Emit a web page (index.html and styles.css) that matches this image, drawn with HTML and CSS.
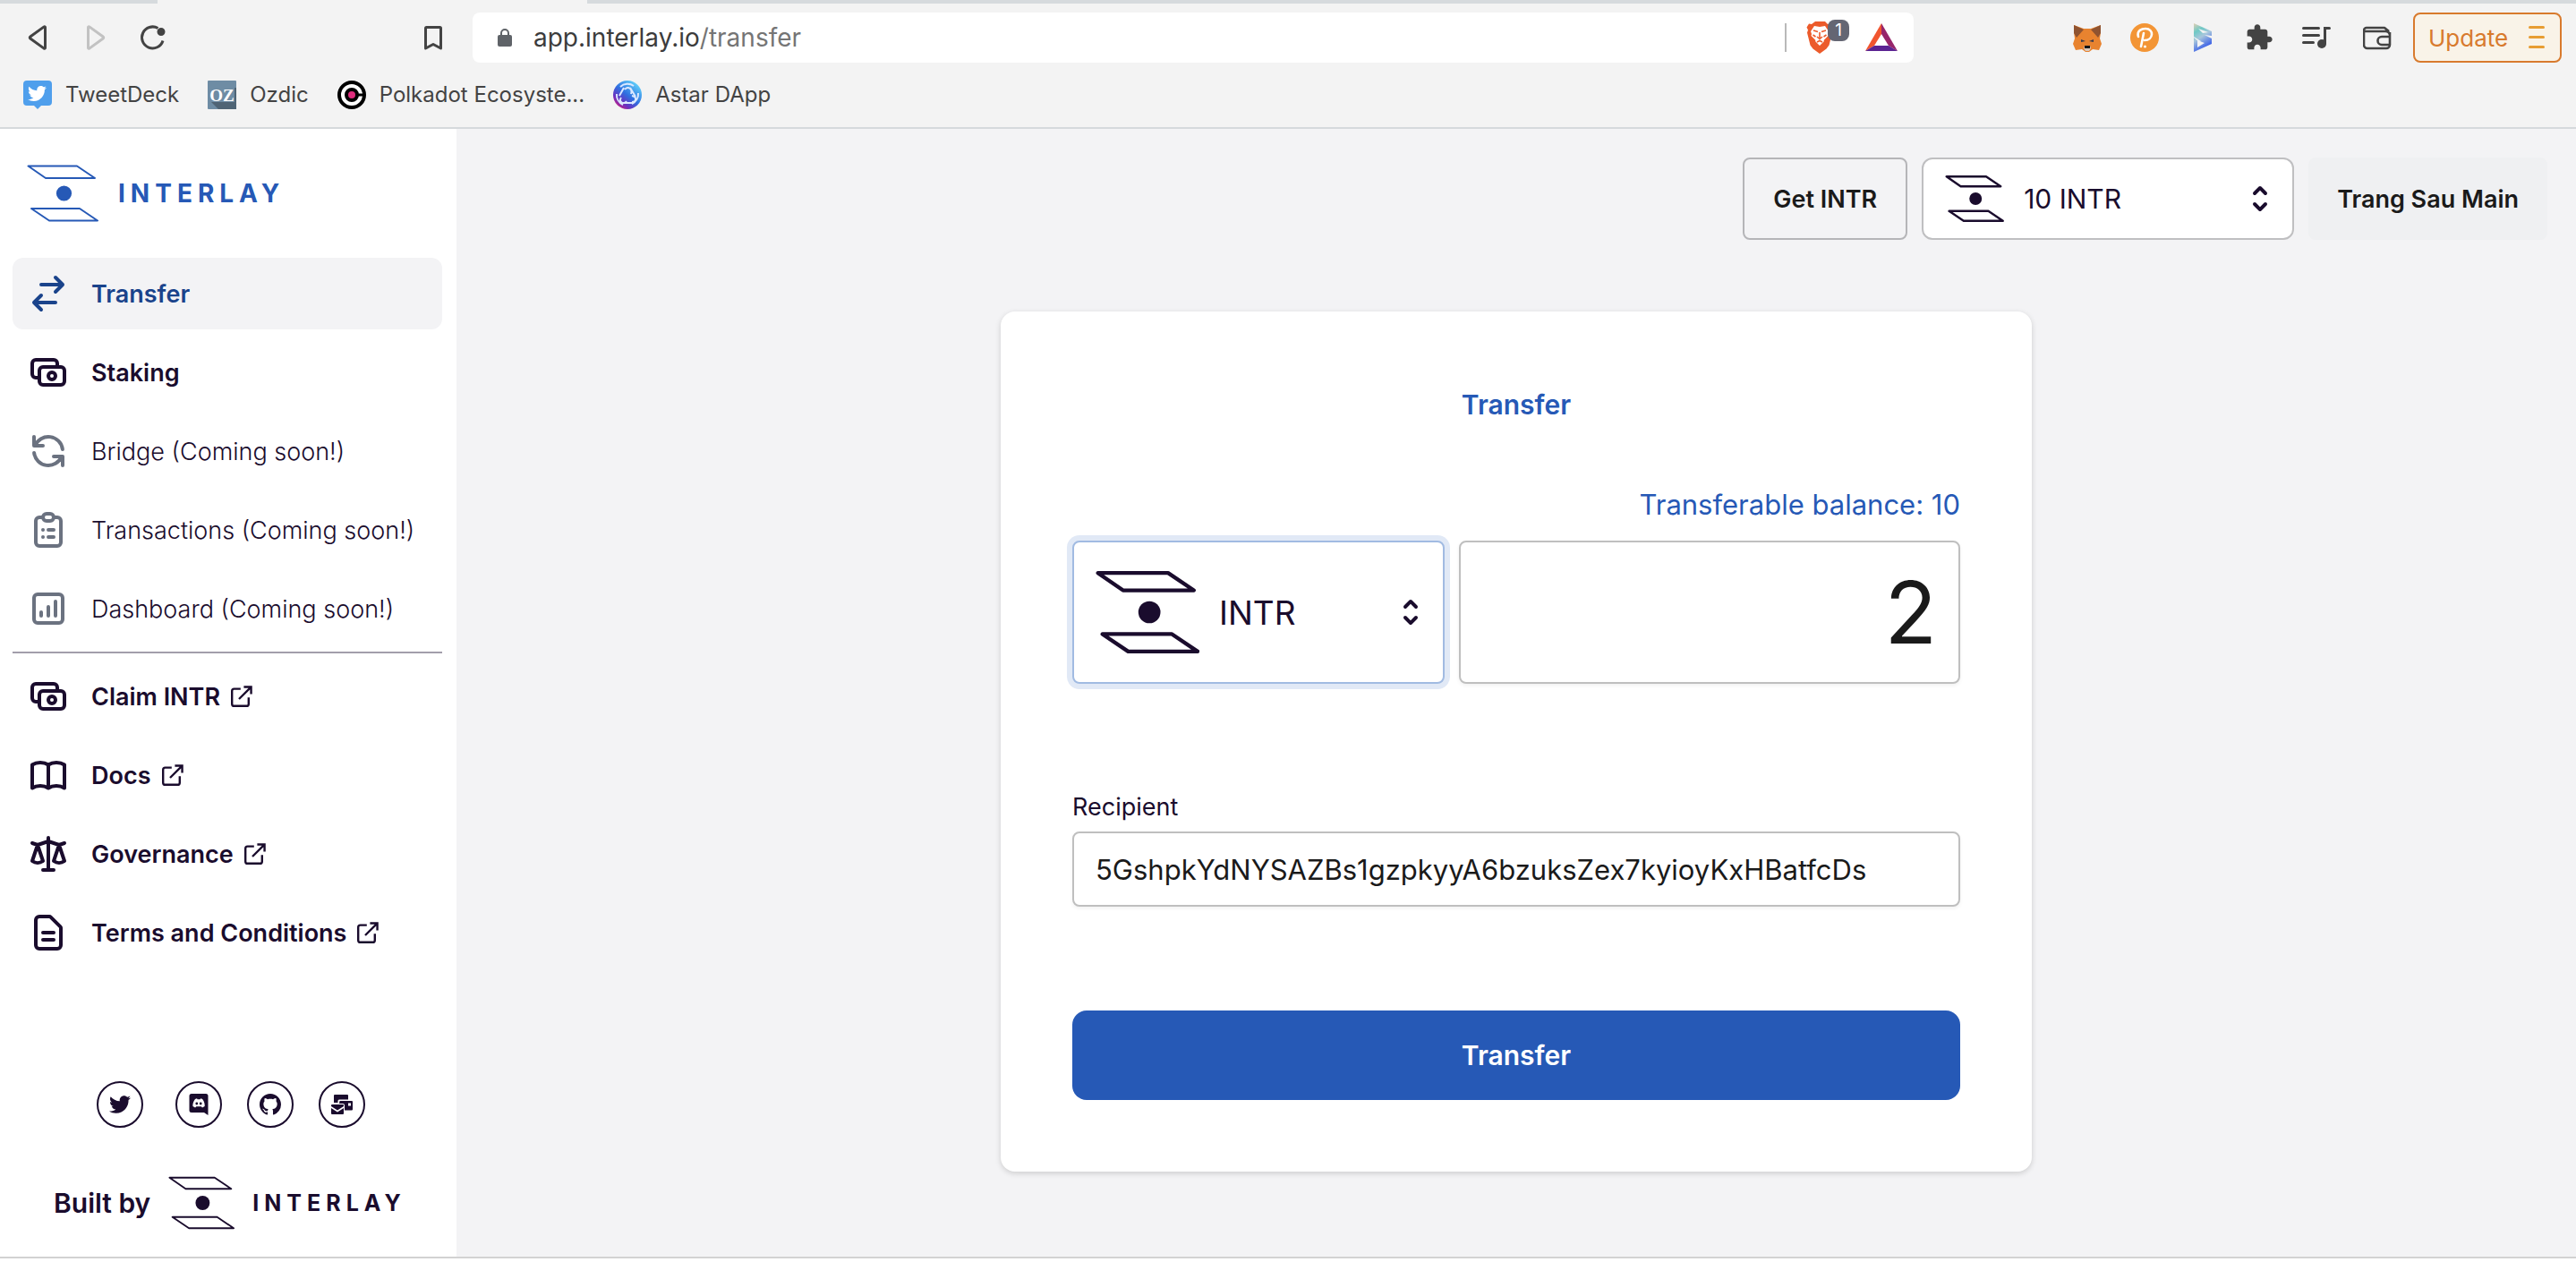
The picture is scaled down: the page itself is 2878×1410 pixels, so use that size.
FILE: index.html
```html
<!DOCTYPE html>
<html lang="en">
<head>
<meta charset="utf-8">
<title>Interlay - Transfer</title>
<link rel="stylesheet" href="styles.css">
</head>
<body>
<svg class="defs" aria-hidden="true">
  <symbol id="mark" viewBox="0 0 80 64">
    <path d="M1.500 1.500H56L76 15H21ZM5 49H59L79 62.500H25Z" fill="none" stroke="currentColor" stroke-linejoin="round"/>
    <circle cx="41.500" cy="32" r="8.600" fill="currentColor" stroke="none"/>
  </symbol>
  <symbol id="switch" viewBox="0 0 24 24"><path d="M8 7h12m0 0l-4-4m4 4l-4 4m0 6H4m0 0l4 4m-4-4l4-4"/></symbol>
  <symbol id="cash" viewBox="0 0 24 24"><path d="M17 9V7a2 2 0 00-2-2H5a2 2 0 00-2 2v6a2 2 0 002 2h2m2 4h10a2 2 0 002-2v-6a2 2 0 00-2-2H9a2 2 0 00-2 2v6a2 2 0 002 2zm7-5a2 2 0 11-4 0 2 2 0 014 0z"/></symbol>
  <symbol id="refresh" viewBox="0 0 24 24"><path d="M4 4v5h.582m15.356 2A8.001 8.001 0 004.582 9m0 0H9m11 11v-5h-.581m0 0a8.003 8.003 0 01-15.357-2m15.357 2H15"/></symbol>
  <symbol id="clipboard" viewBox="0 0 24 24"><path d="M9 5H7a2 2 0 00-2 2v12a2 2 0 002 2h10a2 2 0 002-2V7a2 2 0 00-2-2h-2M9 5a2 2 0 002 2h2a2 2 0 002-2M9 5a2 2 0 012-2h2a2 2 0 012 2m-3 7h3m-3 4h3m-6-4h.01M9 16h.01"/></symbol>
  <symbol id="chart" viewBox="0 0 24 24"><path d="M16 8v8m-4-5v5m-4-2v2m-2 4h12a2 2 0 002-2V6a2 2 0 00-2-2H6a2 2 0 00-2 2v12a2 2 0 002 2z"/></symbol>
  <symbol id="book" viewBox="0 0 24 24"><path d="M12 6.253v13m0-13C10.832 5.477 9.246 5 7.500 5S4.168 5.477 3 6.253v13C4.168 18.477 5.754 18 7.500 18s3.332.477 4.500 1.253m0-13C13.168 5.477 14.754 5 16.500 5c1.747 0 3.332.477 4.500 1.253v13C19.832 18.477 18.247 18 16.500 18c-1.746 0-3.332.477-4.500 1.253"/></symbol>
  <symbol id="scale" viewBox="0 0 24 24"><path d="M3 6l3 1m0 0l-3 9a5.002 5.002 0 006.001 0M6 7l3 9M6 7l6-2m6 2l3-1m-3 1l-3 9a5.002 5.002 0 006.001 0M18 7l3 9m-3-9l-6-2m0-2v2m0 16V5m0 16H9m3 0h3"/></symbol>
  <symbol id="document" viewBox="0 0 24 24"><path d="M9 12h6m-6 4h6m2 5H7a2 2 0 01-2-2V5a2 2 0 012-2h5.586a1 1 0 01.707.293l5.414 5.414a1 1 0 01.293.707V19a2 2 0 01-2 2z"/></symbol>
  <symbol id="external" viewBox="2 2 20 20"><path d="M18.500 13v6a2 2 0 01-2 2H5a2 2 0 01-2-2V7a2 2 0 012-2h6" stroke-linecap="butt"/><path d="M14 3.200h6.800V10M20.500 3.500L9.500 14.500" stroke-linecap="butt" stroke-linejoin="miter"/></symbol>
  <symbol id="selector" viewBox="0 0 20 20"><path fill-rule="evenodd" d="M10 3a1 1 0 01.707.293l3 3a1 1 0 01-1.414 1.414L10 5.414 7.707 7.707a1 1 0 01-1.414-1.414l3-3A1 1 0 0110 3zm-3.707 9.293a1 1 0 011.414 0L10 14.586l2.293-2.293a1 1 0 011.414 1.414l-3 3a1 1 0 01-1.414 0l-3-3a1 1 0 010-1.414z" fill="currentColor"/></symbol>
  <symbol id="twitter" viewBox="0 0 512 512"><path fill="currentColor" d="M459.370 151.716c.325 4.548.325 9.097.325 13.645 0 138.720-105.583 298.558-298.558 298.558-59.452 0-114.680-17.219-161.137-47.106 8.447.974 16.568 1.299 25.340 1.299 49.055 0 94.213-16.568 130.274-44.832-46.132-.975-84.792-31.188-98.112-72.772 6.498.974 12.995 1.624 19.818 1.624 9.421 0 18.843-1.300 27.614-3.573-48.081-9.747-84.143-51.980-84.143-102.985v-1.299c13.969 7.797 30.214 12.670 47.431 13.319-28.264-18.843-46.781-51.005-46.781-87.391 0-19.492 5.197-37.360 14.294-52.954 51.655 63.675 129.300 105.258 216.365 109.807-1.624-7.797-2.599-15.918-2.599-24.040 0-57.828 46.782-104.934 104.934-104.934 30.213 0 57.502 12.670 76.670 33.137 23.715-4.548 46.456-13.320 66.599-25.340-7.798 24.366-24.366 44.833-46.132 57.827 21.117-2.273 41.584-8.122 60.426-16.243-14.292 20.791-32.161 39.308-52.628 54.253z"/></symbol>
</svg>

<header class="browser">
  <div class="tabs"><span class="tab-active"></span></div>
  <div class="toolbar">
    <div class="history">
      <button class="tool" aria-label="Back"><svg viewBox="0 0 32 32"><path d="M24.500 4.500v23a.8.800 0 01-1.300.600L7.800 17a1.200 1.200 0 010-2L23.200 3.900a.8.800 0 011.300.600z"/></svg></button>
      <button class="tool tool-off" aria-label="Forward"><svg viewBox="0 0 32 32"><path d="M8.500 4.500v23a.8.800 0 001.300.600L25.200 17a1.200 1.200 0 000-2L9.800 3.900a.8.800 0 00-1.300.600z"/></svg></button>
      <button class="tool" aria-label="Reload"><svg viewBox="0 0 32 32"><path d="M28 19.500A12 12 0 1122.500 5.500"/><circle cx="26" cy="9.500" r="3.500" fill="currentColor" stroke-width="2"/></svg></button>
    </div>
    <button class="tool tool-bookmark" aria-label="Bookmark"><svg viewBox="0 0 32 32"><path d="M7.500 28V5.500a1 1 0 011-1h15a1 1 0 011 1V28L16 23.500z"/></svg></button>
    <div class="address">
      <svg class="lock" viewBox="0 0 16 22"><path d="M4 9V6a4 4 0 018 0v3" fill="none" stroke="#5f6368" stroke-width="2"/><rect y="8" width="16" height="13" rx="2" fill="#5f6368"/></svg>
      <span class="url">app.interlay.io<span class="url-path">/transfer</span></span>
      <span class="separator"></span>
      <span class="shield">
        <svg viewBox="0 0 30 36"><path d="M10 0h11l3 3 3-.500 2.500 4-1.500 3 1 3-3.500 14-3 4-7.500 5.500-7.500-5.500-3-4L1 12.500l1-3-1.500-3L3 2.500 6 3z" fill="#ec5b2b"/><path d="M9 5l6 1 6-1 4 6-1 3 .5 2-5 5 .5 1L15 27l-5-5 .5-1-5-5 .5-2-1-3z" fill="#fff"/><path d="M8 10l5 1.500M22 10l-5 1.500M15 12v6m-3-1l3 2.500 3-2.500m-6 6l3-1.500 3 1.500M7.500 15l3 2m12-2l-3 2" stroke="#ec5b2b" stroke-width="1.600" fill="none"/></svg>
        <span class="badge">1</span>
      </span>
      <svg class="bat" viewBox="0 0 36 32"><path d="M18 0L0 31l10-6 8-13z" fill="#f1552f"/><path d="M18 0l18 31-10-6-8-13z" fill="#97256a"/><path d="M0 31h36l-10-6H10z" fill="#5b2392"/></svg>
    </div>
    <div class="extensions">
      <svg viewBox="0 0 32 32"><path d="M1 2l11 4h8l11-4v8l-1 7 2 6-3 7-7-1-4 3h-4l-4-3-7 1-3-7 2-6-1-7z" fill="#e8832f"/><path d="M1 2l11 5-8 9-3-5zM31 2L20 7l8 9 3-5z" fill="#8f5330"/><path d="M9 18l5 2-5 1zm14 0l-5 2 5 1z" fill="#3a3a4a"/><path d="M12 28l1-3h6l1 3-2 3h-4z" fill="#d8c9bd"/><path d="M13 25h6v3h-6z" fill="#161616"/></svg>
      <svg viewBox="0 0 32 32"><circle cx="16" cy="16" r="16" fill="#f39535"/><path d="M9 15c-2-7 4-9 8-9 10 0 9 13-1 13M15 11l-3 15" fill="none" stroke="#fff" stroke-width="2.600" stroke-linecap="round"/><circle cx="16.500" cy="26" r="1.500" fill="#fff"/></svg>
      <svg viewBox="0 0 32 32"><defs><linearGradient id="sg" x1="0" y1="0" x2=".4" y2="1"><stop offset="0" stop-color="#e4cfb4"/><stop offset=".3" stop-color="#6fc9c5"/><stop offset=".55" stop-color="#a8c6dc"/><stop offset="1" stop-color="#3157e8"/></linearGradient></defs><path d="M7 0l20 9v5l-8-1 8 4v6L7 32V16l6 5 2-1-8-5z" fill="url(#sg)"/><path d="M12 6l11 4-6 1zM11 19l8 3-8 5z" fill="#f3f3f3"/></svg>
      <svg viewBox="0 0 24 24"><path fill="#434343" d="M20.500 11H19V7c0-1.100-.9-2-2-2h-4V3.500C13 2.120 11.880 1 10.500 1S8 2.120 8 3.500V5H4c-1.100 0-1.990.9-1.990 2v3.800H3.500c1.490 0 2.700 1.210 2.700 2.700s-1.210 2.700-2.700 2.700H2V20c0 1.100.9 2 2 2h3.800v-1.500c0-1.490 1.210-2.700 2.700-2.700 1.490 0 2.700 1.210 2.700 2.700V22H17c1.100 0 2-.9 2-2v-4h1.500c1.380 0 2.500-1.120 2.500-2.500S21.880 11 20.500 11z"/></svg>
      <svg viewBox="0 0 32 32"><path d="M1.500 5.500h17M1.500 13.500h17M1.500 21.500h11M30.500 5.500h-5V22" fill="none" stroke="#434343" stroke-width="3" stroke-linecap="round"/><circle cx="22" cy="23" r="5" fill="#434343"/></svg>
      <svg class="wallet" viewBox="0 0 32 32"><path d="M30 10v14a4 4 0 01-4 4H5a4 4 0 01-4-4V8a3 3 0 013-3h20l5 4M1 9h24a5 5 0 015 4M30 15h-9a4.500 4.500 0 000 9h9" fill="none" stroke="#434343" stroke-width="2.600" stroke-linejoin="round"/></svg>
    </div>
    <button class="update">Update<svg viewBox="0 0 18 26"><path d="M1.500 1.500h15M1.500 12.500h15M1.500 23.500h15" stroke="#e79d33" stroke-width="3" stroke-linecap="round"/></svg></button>
  </div>
  <nav class="bookmarks" aria-label="Bookmarks">
    <a href="#"><svg viewBox="0 0 32 32"><path d="M4 0h24a4 4 0 014 4v20a4 4 0 01-4 4h-8l-4 4-4-4H4a4 4 0 01-4-4V4a4 4 0 014-4z" fill="#4f9fec"/><use href="#twitter" x="5" y="4" width="21" height="21" color="#fff"/></svg>TweetDeck</a>
    <a href="#"><svg viewBox="0 0 32 32"><rect width="32" height="32" rx="1" fill="#6e8ca4"/><path d="M4 24h26V8h2v24H12z" fill="#4f6475"/><text x="16" y="23" text-anchor="middle" class="oz">OZ</text></svg>Ozdic</a>
    <a href="#"><svg viewBox="0 0 32 32"><circle cx="16" cy="16" r="14" fill="#fff" stroke="#000" stroke-width="4"/><circle cx="16" cy="16" r="6" fill="#df2d7d" stroke="#000" stroke-width="4"/><path d="M22 16h8" stroke="#000" stroke-width="3"/></svg>Polkadot Ecosyste...</a>
    <a href="#"><svg viewBox="0 0 32 32"><defs><linearGradient id="ag" x1=".9" y1="0" x2=".1" y2="1"><stop offset="0" stop-color="#6be6ff"/><stop offset=".5" stop-color="#2f6fe0"/><stop offset=".75" stop-color="#6a2fc0"/><stop offset="1" stop-color="#e91e6e"/></linearGradient></defs><circle cx="16" cy="16" r="16" fill="url(#ag)"/><path d="M8 7a12 12 0 0115-1M28 14a12 12 0 01-7 12M11 27a12 12 0 01-7-12M13 10c4-5 9 0 7 5M21 17c6 1 5 7 0 7M15 23c-4 5-9 0-6-4M7 17l5-9M19 8l6 10M21 25H11" fill="none" stroke="#dbe8ff" stroke-width="2"/></svg>Astar DApp</a>
  </nav>
</header>

<div class="app">
  <aside class="sidebar">
    <a class="logo" href="#"><svg class="mark logo-mark"><use href="#mark"/></svg><span class="wordmark">INTERLAY</span></a>
    <nav class="menu" aria-label="Main">
      <a class="item item-active" href="#"><svg><use href="#switch"/></svg>Transfer</a>
      <a class="item" href="#"><svg><use href="#cash"/></svg>Staking</a>
      <a class="item item-soon" href="#"><svg><use href="#refresh"/></svg>Bridge (Coming soon!)</a>
      <a class="item item-soon" href="#"><svg><use href="#clipboard"/></svg>Transactions (Coming soon!)</a>
      <a class="item item-soon" href="#"><svg><use href="#chart"/></svg>Dashboard (Coming soon!)</a>
      <hr>
      <a class="item" href="#"><svg><use href="#cash"/></svg><span class="ext">Claim INTR<svg><use href="#external"/></svg></span></a>
      <a class="item" href="#"><svg><use href="#book"/></svg><span class="ext">Docs<svg><use href="#external"/></svg></span></a>
      <a class="item" href="#"><svg><use href="#scale"/></svg><span class="ext">Governance<svg><use href="#external"/></svg></span></a>
      <a class="item" href="#"><svg><use href="#document"/></svg><span class="ext">Terms and Conditions<svg><use href="#external"/></svg></span></a>
    </nav>
    <div class="social">
      <a class="social-first" href="#" aria-label="Twitter"><svg><use href="#twitter"/></svg></a>
      <a href="#" aria-label="Discord"><svg viewBox="0 0 24 24"><path d="M4 0h16a2.500 2.500 0 012.500 2.500V24L18 21H4a2.500 2.500 0 01-2.500-2.500v-16A2.500 2.500 0 014 0z" fill="currentColor"/><path d="M8 6l2-.8.6 1h3l.6-1 2 .8c2 2.500 2.700 5.500 2.500 8l-2.700 1.600-1.200-1.400H9.300l-1.200 1.400L5.400 14C5.200 11.500 6 8.500 8 6z" fill="#fff"/><circle cx="9.800" cy="11" r="1.400" fill="currentColor"/><circle cx="14.200" cy="11" r="1.400" fill="currentColor"/></svg></a>
      <a href="#" aria-label="GitHub"><svg viewBox="0 0 16 16"><path fill="currentColor" d="M8 0C3.580 0 0 3.580 0 8c0 3.540 2.290 6.530 5.470 7.590.4.070.55-.17.55-.38 0-.19-.01-.82-.01-1.490-2.010.37-2.530-.49-2.690-.94-.09-.23-.48-.94-.82-1.130-.28-.15-.68-.52-.01-.53.63-.01 1.080.58 1.230.82.72 1.210 1.870.87 2.330.66.070-.52.28-.87.51-1.070-1.780-.2-3.640-.89-3.640-3.950 0-.87.31-1.590.82-2.150-.08-.2-.36-1.020.08-2.120 0 0 .67-.21 2.200.82.64-.18 1.320-.27 2-.27.68 0 1.360.09 2 .27 1.530-1.040 2.200-.82 2.200-.82.44 1.100.16 1.920.08 2.120.51.56.82 1.270.82 2.150 0 3.070-1.870 3.750-3.650 3.950.29.25.54.73.54 1.480 0 1.070-.01 1.930-.01 2.200 0 .21.15.46.55.38A8.013 8.013 0 0016 8c0-4.420-3.580-8-8-8z"/></svg></a>
      <a href="#" aria-label="Email"><svg viewBox="0 0 24 24"><path d="M4 1h14a1 1 0 011 1v4.500H9a1.500 1.500 0 00-1.500 1.500v2H3V2a1 1 0 011-1zM9.500 8H23a1 1 0 011 1v8.500a1 1 0 01-1 1h-8V13a2 2 0 00-2-2H9z" fill="currentColor"/><path d="M0 13a1 1 0 011-1h12a1 1 0 011 1v1l-7 4.500L0 14zM0 16l7 4.500 7-4.500v6a1 1 0 01-1 1H1a1 1 0 01-1-1z" fill="currentColor"/><rect x="19" y="10.500" width="3" height="3" fill="#fff"/></svg></a>
    </div>
    <div class="built">Built by<svg class="mark built-mark"><use href="#mark"/></svg><span class="wordmark wordmark-small">INTERLAY</span></div>
  </aside>

  <main class="main">
    <div class="topbar">
      <button class="top-button">Get INTR</button>
      <div class="picker picker-top">
        <svg class="picker-mark"><use href="#mark"/></svg>
        <select aria-label="Balance"><option>10 INTR</option></select>
        <svg class="picker-arrows"><use href="#selector"/></svg>
      </div>
      <button class="top-button top-account">Trang Sau Main</button>
    </div>
    <form class="card">
      <h1>Transfer</h1>
      <label class="balance" for="amount">Transferable balance: 10</label>
      <div class="amount-row">
        <div class="picker picker-focus">
          <svg class="picker-mark"><use href="#mark"/></svg>
          <select aria-label="Token"><option>INTR</option></select>
          <svg class="picker-arrows"><use href="#selector"/></svg>
        </div>
        <input class="field amount" id="amount" type="text" value="2">
      </div>
      <label class="recipient-label" for="recipient">Recipient</label>
      <input class="field recipient" id="recipient" type="text" value="5GshpkYdNYSAZBs1gzpkyyA6bzuksZex7kyioyKxHBatfcDs">
      <button class="submit" type="button">Transfer</button>
    </form>
  </main>
</div>
</body>
</html>
```
FILE: styles.css
```css
* { box-sizing: border-box; }

body {
  margin: 0;
  min-height: 100vh;
  padding-bottom: 4px;
  display: flex;
  flex-direction: column;
  background: #fff;
  color: #1a0c2d;
  font-family: Inter, "Liberation Sans", sans-serif;
  font-size: 27px;
}

a { color: inherit; text-decoration: none; }
button, input, select { font: inherit; color: inherit; }
button { padding: 0; border: 0; background: none; }
svg { display: block; flex: none; }
.defs { position: absolute; width: 0; height: 0; }

/* Browser chrome */
.browser {
  background: #f3f3f3;
  border-bottom: 2px solid #d5d9dc;
  color: #434343;
}
.tabs { height: 4px; padding-left: 176px; background: #d6dadd; }
.tab-active { display: block; width: 480px; height: 4px; background: #f3f3f3; }
.toolbar {
  display: flex;
  align-items: center;
  height: 76px;
  padding: 0 16px 0 26px;
}
.history { display: flex; gap: 32px; }
.tool svg { width: 32px; height: 32px; fill: none; stroke: currentColor; stroke-width: 3; stroke-linejoin: round; }
.tool-off { color: #c2c2c2; }
.tool-bookmark { margin: 0 28px 0 282px; }
.address {
  flex: 1;
  display: flex;
  align-items: center;
  height: 56px;
  padding: 0 18px 0 28px;
  border-radius: 8px;
  background: #fff;
}
.lock { width: 16px; height: 22px; margin-right: 24px; }
.url { flex: 1; color: #3c3c3c; font-size: 28px; }
.url-path { color: #757575; }
.separator { width: 2px; height: 32px; background: #b9b9b9; }
.shield { position: relative; margin: 0 36px 0 22px; }
.shield svg { width: 30px; height: 36px; }
.badge {
  position: absolute;
  left: 24px;
  top: -2px;
  width: 24px;
  height: 24px;
  border-radius: 8px;
  background: #646673;
  color: #fff;
  font-size: 19px;
  line-height: 24px;
  text-align: center;
}
.bat { width: 36px; height: 32px; }
.extensions { display: flex; gap: 32px; margin: 0 24px 0 178px; }
.extensions svg { width: 32px; height: 32px; }
.extensions .wallet { margin-left: 4px; }
.update {
  display: flex;
  align-items: center;
  justify-content: space-between;
  width: 166px;
  height: 56px;
  padding: 0 17px 0 15px;
  border: 2px solid #d87a2d;
  border-radius: 8px;
  background: #f9f3e8;
  color: #d87a2d;
  font-size: 26px;
}
.update svg { width: 18px; height: 26px; }
.bookmarks {
  display: flex;
  gap: 32px;
  height: 62px;
  padding: 10px 26px 0;
  font-size: 24px;
  line-height: 32px;
}
.bookmarks a { display: flex; gap: 15px; height: 32px; }
.bookmarks svg { width: 32px; height: 32px; }
.oz { font: bold 19px "Liberation Serif", serif; fill: #fff; }

/* App shell */
.app {
  flex: 1;
  display: grid;
  grid-template-columns: 510px 1fr;
  background: #f3f3f5;
  border-bottom: 2px solid #d2d2d2;
}
.mark { stroke-width: 2; }
.sidebar {
  display: flex;
  flex-direction: column;
  padding: 40px 16px 30px 14px;
  background: #fff;
}
.logo {
  display: flex;
  align-items: center;
  gap: 22px;
  padding-left: 16px;
  color: #2659b6;
}
.logo-mark { width: 80px; height: 64px; }
.wordmark { font-size: 28px; font-weight: 700; letter-spacing: 6px; }
.menu { display: flex; flex-direction: column; gap: 8px; margin-top: 40px; }
.menu hr { width: 100%; height: 2px; margin: 0; border: 0; background: #a29eab; }
.item {
  display: flex;
  align-items: center;
  gap: 24px;
  height: 80px;
  padding: 0 16px;
  border-radius: 12px;
  font-weight: 600;
}
.item svg {
  width: 48px;
  height: 48px;
  fill: none;
  stroke: currentColor;
  stroke-width: 2;
  stroke-linecap: round;
  stroke-linejoin: round;
}
.item-active { background: #f3f3f5; color: #1a438b; }
.item-soon { font-weight: 300; }
.item-soon svg { color: #6b7280; }
.ext { display: flex; align-items: center; gap: 12px; }
.ext svg { width: 24px; height: 24px; }
.social {
  display: flex;
  gap: 28px;
  margin-top: auto;
  padding-left: 94px;
}
.social a {
  display: grid;
  place-items: center;
  width: 52px;
  height: 52px;
  border: 2px solid currentColor;
  border-radius: 50%;
}
.social .social-first { margin-right: 8px; }
.social svg { width: 24px; height: 24px; }
.built {
  display: flex;
  align-items: center;
  gap: 20px;
  margin-top: 54px;
  padding-left: 46px;
  font-size: 30px;
  font-weight: 600;
}
.built-mark { width: 74px; height: 60px; }
.wordmark-small { font-size: 25px; }

.main { padding: 32px; }
.topbar { display: flex; justify-content: flex-end; gap: 16px; }
.top-button {
  height: 92px;
  padding: 0 32px;
  border: 2px solid #b5b5b8;
  border-radius: 8px;
  color: #1a1a1a;
  font-weight: 600;
}
.top-account { padding: 0 30px; border-color: #eff0f2; background: #eff0f2; }

.picker {
  display: flex;
  align-items: center;
  width: 416px;
  border: 2px solid #bfbfc1;
  border-radius: 12px;
  background: #fff;
}
.picker select {
  flex: 1;
  min-width: 0;
  padding: 0;
  border: 0;
  outline: 0;
  appearance: none;
  background: none;
}
.picker-mark { stroke-width: 3; }
.picker-arrows { width: 40px; height: 40px; margin-right: 16px; }
.picker-top { padding-left: 24px; font-size: 30px; }
.picker-top .picker-mark { width: 66px; height: 52px; margin-right: 22px; }
.picker-focus {
  height: 160px;
  padding-left: 24px;
  border-color: #a1bbe2;
  border-radius: 8px;
  box-shadow: 0 0 0 6px #e1e9f6;
  font-size: 37px;
}
.picker-focus .picker-mark { width: 116px; height: 92px; margin-right: 22px; }

.card {
  display: flex;
  flex-direction: column;
  width: 1152px;
  max-width: 100%;
  margin: 80px auto 0;
  padding: 80px;
  border-radius: 16px;
  background: #fff;
  box-shadow: 0 2px 6px rgba(0, 0, 0, .16);
}
.card h1 {
  margin: 0;
  color: #2659b6;
  font-size: 30px;
  font-weight: 600;
  line-height: 48px;
  text-align: center;
}
.balance {
  margin: 64px 0 16px;
  color: #2659b6;
  font-size: 31px;
  line-height: 48px;
  text-align: right;
}
.amount-row { display: flex; gap: 16px; }
.field {
  min-width: 0;
  border: 2px solid #bfbfbf;
  border-radius: 8px;
  background: #fff;
  box-shadow: 0 2px 4px rgba(0, 0, 0, .06);
  color: #1a1a1a;
  padding: 0 24px;
}
.amount { flex: 1; height: 160px; font-size: 96px; text-align: right; }
.recipient-label { margin-top: 118px; font-size: 27px; line-height: 40px; }
.recipient { height: 84px; margin-top: 7px; font-size: 31px; }
.submit {
  height: 100px;
  margin-top: 116px;
  border-radius: 16px;
  background: #2659b6;
  color: #fff;
  font-size: 30px;
  font-weight: 600;
}
```
